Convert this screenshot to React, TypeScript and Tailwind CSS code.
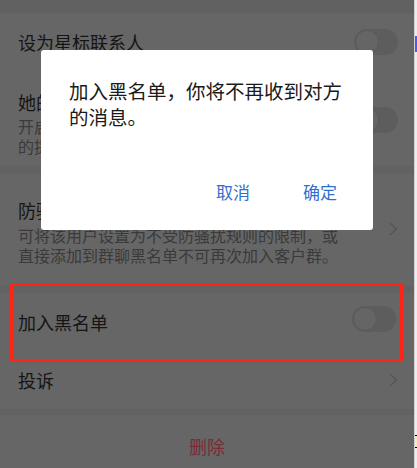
import React from "react";

const cjk = { fontFamily: '"Noto Sans CJK SC", "Noto Sans", sans-serif' };

function Toggle() {
  return (
    <div className="relative h-[26px] w-[44px] shrink-0 rounded-full bg-[#5d5d5d]">
      <div className="absolute left-[1px] top-[1px] h-[24px] w-[24px] rounded-full border border-[#5a5a5a] bg-[#656565]" />
    </div>
  );
}

function Chevron() {
  return (
    <svg width="9" height="14" viewBox="0 0 9 14" className="shrink-0">
      <path d="M1.5 1.5 L7.5 7 L1.5 12.5" fill="none" stroke="#565656" strokeWidth="1.4" strokeLinecap="round" strokeLinejoin="round" />
    </svg>
  );
}

export default function App() {
  return (
    <div className="flex h-[468px] w-[417px] overflow-hidden" style={cjk}>
      {/* settings page, dimmed behind the dialog */}
      <div className="relative flex w-[414px] shrink-0 flex-col bg-[#666666] text-[#151515]">
        <div className="h-[14px] border-b-2 border-[#636363] bg-[#606060]" />

        {/* contact options */}
        <div className="flex flex-col">
          <div className="flex h-[56px] items-center justify-between pl-[18px] pr-[16px]">
            <span className="text-[18px] leading-6">设为星标联系人</span>
            <Toggle />
          </div>
          <div className="flex items-center justify-between pb-[10px] pl-[18px] pr-[16px] pt-[20px]">
            <div className="flex flex-col">
              <span className="text-[18px] leading-6">她的朋友圈</span>
              <span className="mt-[2px] text-[16px] leading-[20px] text-[#3a3a3a]">
                开启后，对方的朋友圈将不会出现在你
                <br />
                的提醒中
              </span>
            </div>
            <div className="-mt-[6px]">
              <Toggle />
            </div>
          </div>
        </div>

        <div className="h-[8px] bg-[#626262]" />

        {/* anti-harassment */}
        <div className="flex items-center justify-between pb-[21px] pl-[18px] pr-[16px] pt-[24px]">
          <div className="flex flex-col">
            <span className="text-[18px] leading-6">防骚扰设置</span>
            <span className="mt-[3px] text-[16px] leading-[20px] text-[#3a3a3a]">
              可将该用户设置为不受防骚扰规则的限制，或
              <br />
              直接添加到群聊黑名单不可再次加入客户群。
            </span>
          </div>
          <div className="-mt-[6px]">
            <Chevron />
          </div>
        </div>

        <div className="h-[7px] bg-[#626262]" />

        <div className="flex flex-col">
          <div className="relative flex h-[58px] items-center justify-between pl-[18px] pr-[18px]">
            <span className="text-[18px] leading-6">加入黑名单</span>
            <div className="-mt-[6px]">
              <Toggle />
            </div>
            <div className="pointer-events-none absolute -bottom-[11px] -top-[10px] left-[10px] right-[11px] rounded-[3px] border-[3px] border-[#ff2415]" />
          </div>
          <div className="flex h-[58px] items-center justify-between pl-[18px] pr-[16px]">
            <span className="text-[18px] leading-6">投诉</span>
            <Chevron />
          </div>
        </div>

        <div className="h-[6px] bg-[#626262]" />

        <div className="flex flex-1 items-start justify-center pt-[19px]">
          <span className="text-[18px] leading-6 text-[#7a2c34]">删除</span>
        </div>

        {/* confirmation dialog */}
        <div className="absolute left-[41px] top-[50px] flex h-[180px] w-[332px] flex-col rounded-[3px] bg-white pb-[26px] pl-[28px] pt-[28px]">
          <p className="w-[278px] text-[19.5px] leading-[26px] text-[#1a1a1a]">
            加入黑名单，你将不再收到对方的消息。
          </p>
          <div className="mt-auto flex justify-end gap-[53px] pr-[36px]">
            <span className="text-[17px] leading-6 text-[#2f6fce]">取消</span>
            <span className="text-[17px] leading-6 text-[#2f6fce]">确定</span>
          </div>
        </div>
      </div>

      {/* neighbouring window edge */}
      <div className="flex w-[3px] shrink-0 flex-col border-l border-[#d0d0d0] bg-[#ececec]">
        <div className="mt-[36px] h-[16px] bg-[#4a5cf0]" />
        <div className="mt-[383px] h-[13px] border-y border-black bg-[#f3efb4]" />
      </div>
    </div>
  );
}
